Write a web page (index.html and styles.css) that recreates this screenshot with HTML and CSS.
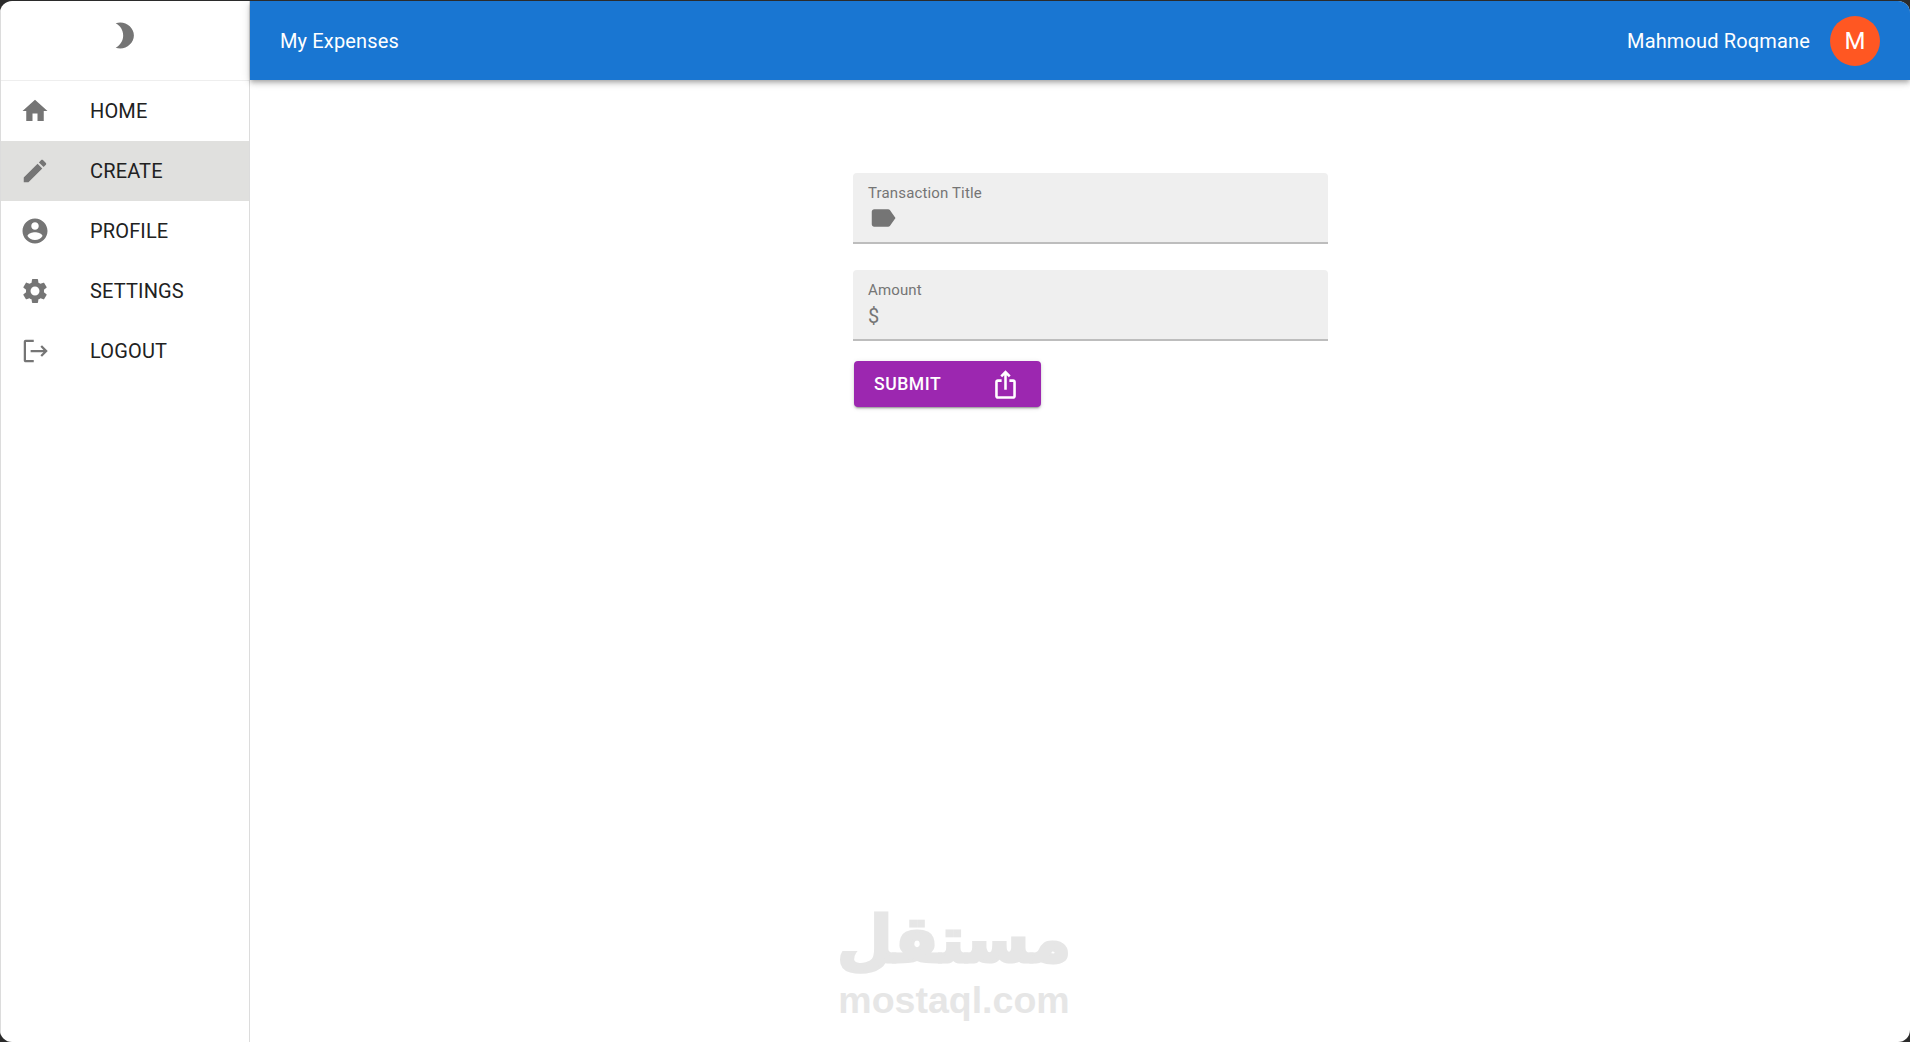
FILE: index.html
```html
<!DOCTYPE html>
<html lang="en">
<head>
    <meta charset="UTF-8">
    <meta name="viewport" content="width=device-width, initial-scale=1.0">
    <title>My Expenses</title>
    <link rel="stylesheet" href="styles.css">
</head>
<body>
    <div class="window">
        <aside class="sidebar">
            <div class="sidebar-top">
                <svg class="moon" viewBox="0 0 24 24"><path d="M8 2c5.5 0 10.5 4.5 10.5 10S13.5 22 8 22c-1.2 0-2.4-.2-3.6-.6C8 19.5 10.2 16 10.2 12S8 4.5 4.4 2.6C5.6 2.2 6.8 2 8 2z"/></svg>
            </div>
            <nav class="nav">
                <a class="nav-item">
                    <svg class="nav-icon" viewBox="0 0 24 24"><path d="M10 20v-6h4v6h5v-8h3L12 3 2 12h3v8z"/></svg>
                    <span>HOME</span>
                </a>
                <a class="nav-item active">
                    <svg class="nav-icon" viewBox="0 0 24 24"><path d="M3 17.25V21h3.75L17.81 9.94l-3.75-3.75L3 17.25zM20.71 7.04c.39-.39.39-1.02 0-1.41l-2.34-2.34c-.39-.39-1.02-.39-1.41 0l-1.83 1.83 3.75 3.75 1.83-1.83z"/></svg>
                    <span>CREATE</span>
                </a>
                <a class="nav-item">
                    <svg class="nav-icon" viewBox="0 0 24 24"><path d="M12 2C6.48 2 2 6.48 2 12s4.48 10 10 10 10-4.48 10-10S17.52 2 12 2zm0 3c1.66 0 3 1.34 3 3s-1.34 3-3 3-3-1.34-3-3 1.34-3 3-3zm0 14.2c-2.5 0-4.71-1.28-6-3.22.03-1.99 4-3.08 6-3.08 1.99 0 5.97 1.09 6 3.08-1.29 1.94-3.5 3.22-6 3.22z"/></svg>
                    <span>PROFILE</span>
                </a>
                <a class="nav-item">
                    <svg class="nav-icon" viewBox="0 0 24 24"><path d="M19.14 12.94c.04-.3.06-.61.06-.94 0-.32-.02-.64-.07-.94l2.03-1.58c.18-.14.23-.41.12-.61l-1.92-3.32c-.12-.22-.37-.29-.59-.22l-2.39.96c-.5-.38-1.03-.7-1.62-.94l-.36-2.54c-.04-.24-.24-.41-.48-.41h-3.84c-.24 0-.43.17-.47.41l-.36 2.54c-.59.24-1.13.57-1.62.94l-2.39-.96c-.22-.08-.47 0-.59.22L2.74 8.87c-.12.21-.08.47.12.61l2.03 1.58c-.05.3-.09.63-.09.94s.02.64.07.94l-2.03 1.58c-.18.14-.23.41-.12.61l1.92 3.32c.12.22.37.29.59.22l2.39-.96c.5.38 1.03.7 1.62.94l.36 2.54c.05.24.24.41.48.41h3.84c.24 0 .44-.17.47-.41l.36-2.54c.59-.24 1.13-.56 1.62-.94l2.39.96c.22.08.47 0 .59-.22l1.92-3.32c.12-.22.07-.47-.12-.61l-2.01-1.58zM12 15.6c-1.98 0-3.6-1.62-3.6-3.6s1.62-3.6 3.6-3.6 3.6 1.62 3.6 3.6-1.62 3.6-3.6 3.6z"/></svg>
                    <span>SETTINGS</span>
                </a>
                <a class="nav-item">
                    <svg class="nav-icon" viewBox="0 0 24 24"><path d="M11 3H4.5C3.67 3 3 3.67 3 4.5v15c0 .83.67 1.5 1.5 1.5H11v-1.8H4.8V4.8H11V3zm6.6 4.4l-1.27 1.27 2.43 2.43H8.5v1.8h10.26l-2.43 2.43 1.27 1.27L22.2 12l-4.6-4.6z"/></svg>
                    <span>LOGOUT</span>
                </a>
            </nav>
        </aside>
        <div class="main">
            <header class="topbar">
                <div class="topbar-title">My Expenses</div>
                <div class="user">
                    <span class="user-name">Mahmoud Roqmane</span>
                    <div class="avatar">M</div>
                </div>
            </header>
            <div class="content">
                <form class="expense-form">
                    <div class="field">
                        <label>Transaction Title</label>
                        <svg class="field-icon" viewBox="0 0 24 24"><path d="M17.63 5.84C17.27 5.33 16.67 5 16 5L5 5.01C3.9 5.01 3 5.9 3 7v10c0 1.1.9 1.99 2 1.99L16 19c.67 0 1.27-.33 1.63-.84L22 12l-4.37-6.16z"/></svg>
                    </div>
                    <div class="field">
                        <label>Amount</label>
                        <div class="prefix">$</div>
                    </div>
                    <button type="button" class="submit">
                        <span>SUBMIT</span>
                        <svg class="submit-icon" viewBox="0 0 24 24"><path d="M16 5l-1.42 1.42-1.59-1.59V16h-1.98V4.83L9.42 6.42 8 5l4-4 4 4zm4 5v11c0 1.1-.9 2-2 2H6c-1.11 0-2-.9-2-2V10c0-1.11.89-2 2-2h3v2H6v11h12V10h-3V8h3c1.1 0 2 .89 2 2z"/></svg>
                    </button>
                </form>
            </div>
        </div>
        <div class="watermark">
            <div class="watermark-ar" lang="ar" dir="rtl">مستقل</div>
            <div class="watermark-en">mostaql.com</div>
        </div>
    </div>
</body>
</html>
```

FILE: styles.css
```css
html, body {
    height: 100%;
}
body {
    margin: 0;
    background-color: #2b2b2b;
    font-family: Roboto, 'Liberation Sans', sans-serif;
    overflow: hidden;
}
.window {
    position: relative;
    display: flex;
    height: 1041px;
    margin-top: 1px;
    background-color: #ffffff;
    border-radius: 12px;
    overflow: hidden;
}
.sidebar {
    width: 248px;
    flex-shrink: 0;
    border-left: 1px solid #dcdcdc;
    border-right: 1px solid #dcdcdc;
}
.sidebar-top {
    display: flex;
    justify-content: center;
    align-items: center;
    height: 79px;
    border-bottom: 1px solid #eeeeee;
}
.moon {
    width: 31px;
    height: 31px;
    fill: #757575;
    margin-top: -10px;
}
.nav-item {
    display: flex;
    align-items: center;
    height: 60px;
    padding-left: 19px;
    color: #212121;
    font-size: 20px;
    letter-spacing: 0.15px;
}
.nav-item.active {
    background-color: #e0e0de;
}
.nav-icon {
    width: 30px;
    height: 30px;
    fill: #757575;
    margin-right: 40px;
}
.main {
    flex: 1;
    min-width: 0;
}
.topbar {
    display: flex;
    justify-content: space-between;
    align-items: center;
    height: 79px;
    padding: 0 30px;
    background-color: #1976d2;
    color: #ffffff;
    font-size: 20px;
    letter-spacing: 0.15px;
    box-shadow: 0 2px 4px -1px rgba(0, 0, 0, 0.2), 0 4px 5px rgba(0, 0, 0, 0.14), 0 1px 10px rgba(0, 0, 0, 0.12);
}
.user {
    display: flex;
    align-items: center;
    gap: 20px;
}
.avatar {
    display: flex;
    justify-content: center;
    align-items: center;
    width: 50px;
    height: 50px;
    border-radius: 50%;
    background-color: #ff5722;
    font-size: 24px;
}
.content {
    padding: 93px 0 0 603px;
}
.expense-form {
    width: 475px;
}
.field {
    box-sizing: border-box;
    height: 71px;
    margin-bottom: 26px;
    padding: 10px 15px 0;
    background-color: #efefef;
    border-bottom: 2px solid #bdbdbd;
    border-radius: 4px 4px 0 0;
}
.field label {
    display: block;
    color: #757575;
    font-size: 15px;
    letter-spacing: 0.15px;
    line-height: 20px;
}
.field-icon {
    display: block;
    width: 30px;
    height: 30px;
    fill: #757575;
}
.prefix {
    color: #757575;
    font-size: 20px;
    line-height: 28px;
    margin-top: 2px;
}
.submit {
    display: flex;
    justify-content: space-between;
    align-items: center;
    width: 187px;
    height: 46px;
    margin: -6px 0 0 1px;
    padding: 0 20px;
    border: none;
    border-radius: 4px;
    background-color: #9c27b0;
    color: #ffffff;
    font-family: inherit;
    font-size: 17.6px;
    font-weight: 500;
    letter-spacing: 0.5px;
    box-shadow: 0 3px 1px -2px rgba(0, 0, 0, 0.2), 0 2px 2px rgba(0, 0, 0, 0.14), 0 1px 5px rgba(0, 0, 0, 0.12);
}
.submit-icon {
    width: 31px;
    height: 31px;
    fill: #ffffff;
}
.watermark {
    position: absolute;
    left: 819px;
    top: 897px;
    width: 270px;
    text-align: center;
    color: #e6e6e6;
    font-weight: bold;
}
.watermark-ar {
    font-family: 'DejaVu Sans', sans-serif;
    font-size: 64px;
    line-height: 84px;
    -webkit-text-stroke: 3px #e6e6e6;
}
.watermark-en {
    font-family: 'Liberation Sans', sans-serif;
    font-size: 37.5px;
    line-height: 36px;
}
```
